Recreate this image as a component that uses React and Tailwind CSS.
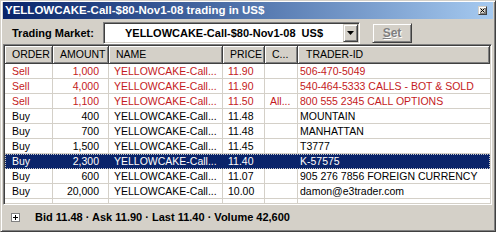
const COLS = "grid grid-cols-[48px_56px_114px_42px_33px_1fr]";

const rows = [
  { order: "Sell", amount: "1,000", price: "11.90", c: "", trader: "506-470-5049" },
  { order: "Sell", amount: "4,000", price: "11.90", c: "", trader: "540-464-5333 CALLS - BOT & SOLD" },
  { order: "Sell", amount: "1,100", price: "11.50", c: "All...", trader: "800 555 2345 CALL OPTIONS" },
  { order: "Buy", amount: "400", price: "11.48", c: "", trader: "MOUNTAIN" },
  { order: "Buy", amount: "700", price: "11.48", c: "", trader: "MANHATTAN" },
  { order: "Buy", amount: "1,500", price: "11.45", c: "", trader: "T3777" },
  { order: "Buy", amount: "2,300", price: "11.40", c: "", trader: "K-57575", selected: true },
  { order: "Buy", amount: "600", price: "11.07", c: "", trader: "905 276 7856 FOREIGN CURRENCY" },
  { order: "Buy", amount: "20,000", price: "10.00", c: "", trader: "damon@e3trader.com" },
];

const raised =
  "border border-t-[#d4d0c8] border-l-[#d4d0c8] border-r-[#404040] border-b-[#404040] shadow-[inset_1px_1px_0_#fff,inset_-1px_-1px_0_#808080]";
const sunken =
  "border border-t-[#808080] border-l-[#808080] border-r-white border-b-white shadow-[inset_1px_1px_0_#404040,inset_-1px_-1px_0_#d4d0c8]";

function HeaderCell({ children }) {
  return (
    <div className="h-[18px] box-border bg-[#d4d0c8] border-r border-b border-[#404040] shadow-[inset_1px_1px_0_#fff,inset_-1px_-1px_0_#808080] pl-[7px] leading-[17px] text-[10.5px] text-black overflow-hidden whitespace-nowrap">
      {children}
    </div>
  );
}

export default function App() {
  return (
    <div className="w-[496px] h-[232px] box-border bg-[#d4d0c8] border border-t-[#d4d0c8] border-l-[#d4d0c8] border-r-[#404040] border-b-[#404040] shadow-[inset_1px_1px_0_#fff,inset_-1px_-1px_0_#808080] pt-[1px] px-[2px] pb-[2px] flex flex-col font-['Liberation_Sans',Arial,sans-serif] select-none">
      {/* TITLE BAR */}
      <div className="h-[17px] shrink-0 flex items-center justify-between bg-gradient-to-r from-[#0a246a] to-[#a6caf0] pl-[2px] pr-[6px]">
        <span className="text-white font-bold text-[11.5px] leading-[17px] whitespace-nowrap">
          YELLOWCAKE-Call-$80-Nov1-08 trading in US$
        </span>
        <div className={`w-[9px] h-[9px] box-border bg-[#d4d0c8] ${raised} flex items-center justify-center`}>
          <svg width="5" height="5" viewBox="0 0 5 5">
            <path d="M0.5 0.5 L4.5 4.5 M4.5 0.5 L0.5 4.5" stroke="#000" strokeWidth="1" />
          </svg>
        </div>
      </div>

      {/* TOOLBAR */}
      <div className="h-[25px] shrink-0 flex items-start pt-[3px]">
        <div className="w-[100px] shrink-0 pl-[9px] font-bold text-[11px] leading-[22px] text-black whitespace-nowrap">
          Trading Market:
        </div>
        <div className={`w-[257px] h-[22px] box-border bg-white ${sunken} flex items-center p-[1px]`}>
          <div className="flex-1 text-center font-bold text-[11px] text-black whitespace-pre">
            YELLOWCAKE-Call-$80-Nov1-08  US$
          </div>
          <div className={`w-[15px] h-[18px] box-border bg-[#d4d0c8] ${raised} flex items-center justify-center`}>
            <svg width="7" height="4" viewBox="0 0 7 4">
              <path d="M0 0 H7 L3.5 4 Z" fill="#000" />
            </svg>
          </div>
        </div>
        <div className={`ml-[12px] mt-[1px] w-[40px] h-[20px] box-border bg-[#d4d0c8] ${raised} flex items-center justify-center`}>
          <span className="font-bold text-[12px] text-[#808080] [text-shadow:1px_1px_0_#fff]">
            <span className="underline">S</span>et
          </span>
        </div>
      </div>

      {/* TABLE */}
      <div className={`h-[161px] shrink-0 mr-[1px] box-border ${sunken} p-[1px] flex flex-col bg-white`}>
        <div className={COLS}>
          <HeaderCell>ORDER</HeaderCell>
          <HeaderCell>AMOUNT</HeaderCell>
          <HeaderCell>NAME</HeaderCell>
          <HeaderCell>PRICE</HeaderCell>
          <HeaderCell>C...</HeaderCell>
          <HeaderCell>
            <span className="pl-[1px]">TRADER-ID</span>
          </HeaderCell>
        </div>

        {rows.map((r, i) => {
          const color = r.selected
            ? "text-white"
            : r.order === "Sell"
            ? "text-[#c41a22]"
            : "text-black";
          const line = r.selected ? "border-[#0a246a]" : "border-[#d4d0c8]";
          return (
            <div
              key={i}
              className={`${COLS} h-[15px] box-border border-b ${line} text-[10.5px] leading-[14px] ${color} ${
                r.selected
                  ? "bg-[#0a246a] outline-1 outline-dotted -outline-offset-1 outline-[#c8c8c8]"
                  : ""
              }`}
            >
              <div className={`border-r ${line} pl-[7px] whitespace-nowrap overflow-hidden`}>{r.order}</div>
              <div className={`border-r ${line} pr-[9px] text-right whitespace-nowrap overflow-hidden`}>{r.amount}</div>
              <div className={`border-r ${line} pl-[5px] whitespace-nowrap overflow-hidden`}>YELLOWCAKE-Call...</div>
              <div className={`border-r ${line} pl-[5px] whitespace-nowrap overflow-hidden`}>{r.price}</div>
              <div className={`border-r ${line} pl-[5px] whitespace-nowrap overflow-hidden`}>{r.c}</div>
              <div className="pl-[2px] whitespace-nowrap overflow-hidden">{r.trader}</div>
            </div>
          );
        })}

        <div className={`${COLS} flex-1`}>
          <div className="border-r border-[#d4d0c8]" />
          <div className="border-r border-[#d4d0c8]" />
          <div className="border-r border-[#d4d0c8]" />
          <div className="border-r border-[#d4d0c8]" />
          <div className="border-r border-[#d4d0c8]" />
          <div />
        </div>
      </div>

      {/* STATUS */}
      <div className="flex-1 flex items-center">
        <div className="ml-[8px] w-[9px] h-[9px] box-border border border-[#808080] bg-white flex items-center justify-center">
          <svg width="5" height="5" viewBox="0 0 5 5">
            <path d="M0 2.5 H5 M2.5 0 V5" stroke="#000" strokeWidth="1" />
          </svg>
        </div>
        <span className="ml-[15px] font-bold text-[11px] text-black whitespace-nowrap">
          Bid 11.48 · Ask 11.90 · Last 11.40 · Volume 42,600
        </span>
      </div>
    </div>
  );
}
